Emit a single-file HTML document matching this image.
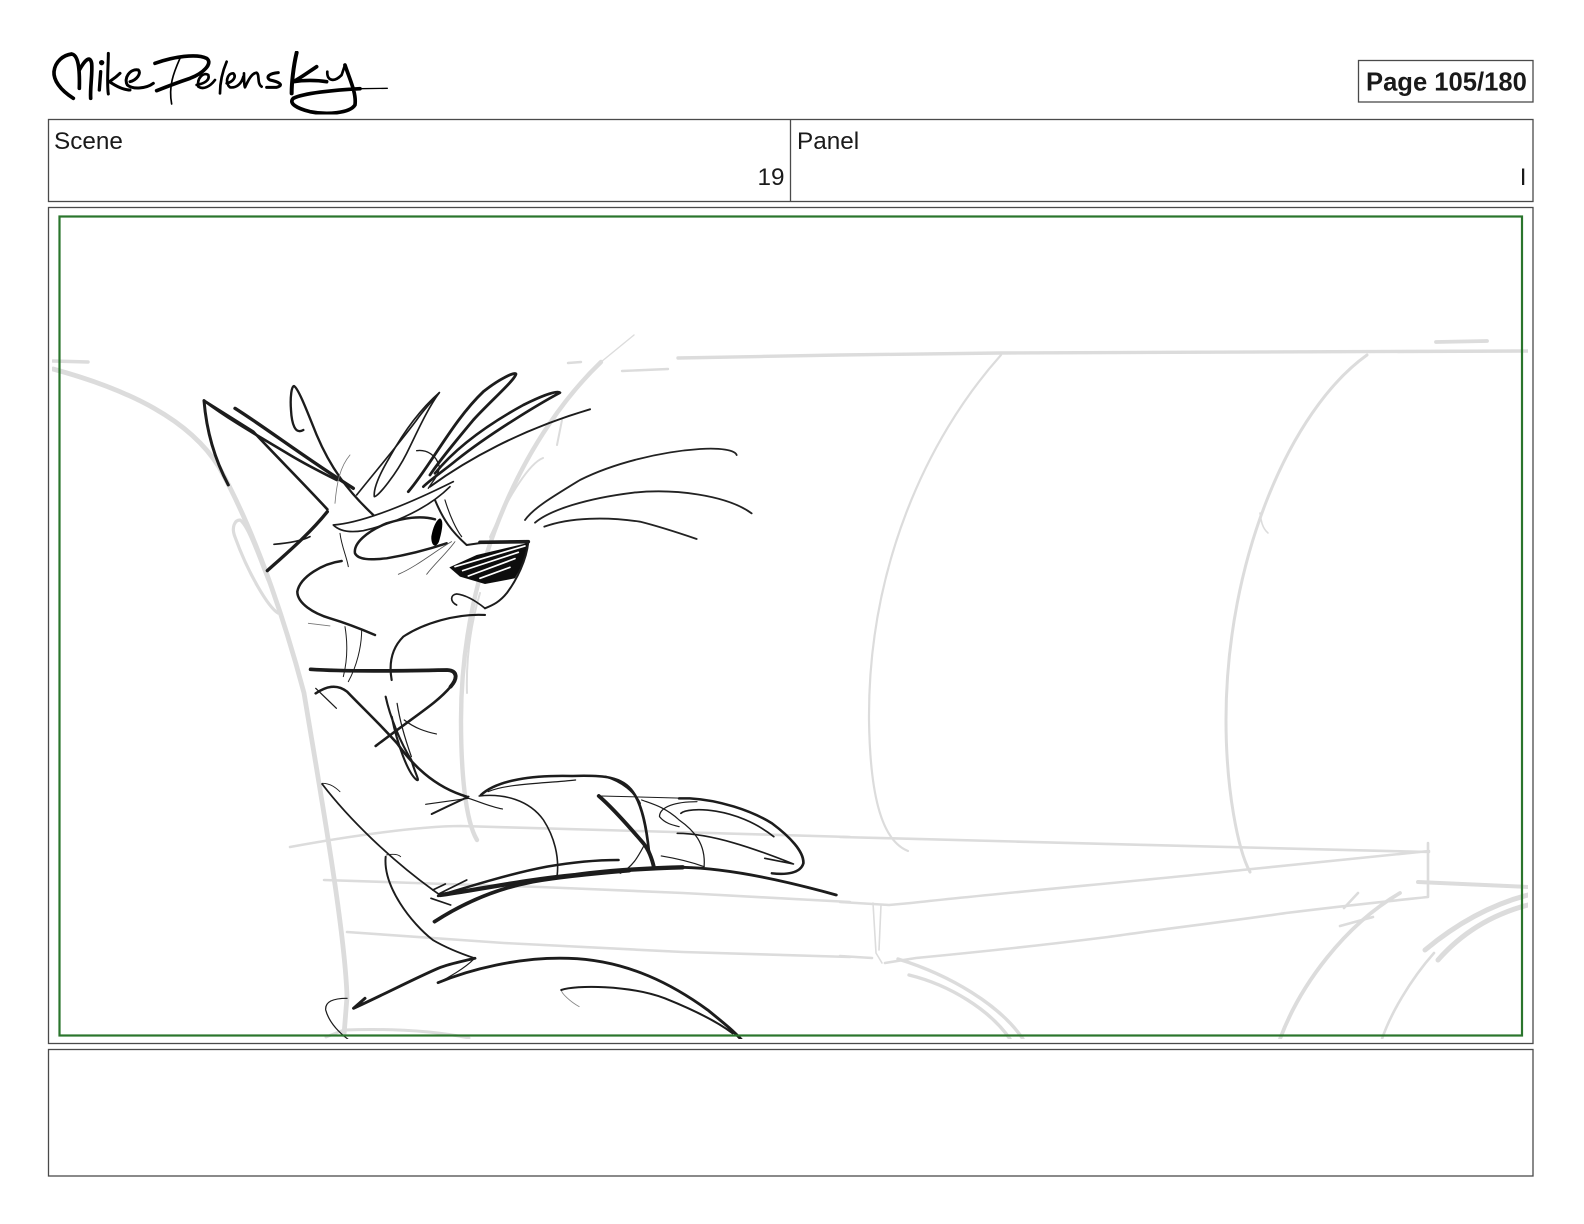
<!DOCTYPE html>
<html lang="en">
<head>
<meta charset="utf-8">
<title>Storyboard page 105/180</title>
<style>
html,body{margin:0;padding:0;background:#fff;width:1584px;height:1224px;overflow:hidden}
svg{display:block;position:absolute;left:0;top:0}
text{font-family:"Liberation Sans",Arial,sans-serif;fill:#1a1a1a}
</style>
</head>
<body>
<svg width="1584" height="1224" viewBox="0 0 1584 1224" xmlns="http://www.w3.org/2000/svg">
<defs>
<clipPath id="c"><rect x="52" y="209" width="1476" height="830"/></clipPath>
<filter id="b" x="-2%" y="-2%" width="104%" height="104%"><feGaussianBlur stdDeviation="0.35"/></filter>
</defs>
<rect width="1584" height="1224" fill="#fff"/>

<!-- signature -->
<g transform="translate(40 30) scale(.3333)" fill="none" stroke="#000" stroke-linecap="round" stroke-linejoin="round" filter="url(#b)">
<title>Mike Pelensky signature</title>
<path stroke-width="11" d="M100 205C60 180 40 150 42 125C45 95 70 75 95 72C112 75 120 105 118 175"/>
<path stroke-width="11" d="M118 120C135 90 150 75 155 100C158 130 150 170 152 205"/>
<circle cx="185" cy="98" r="8" fill="#000" stroke="none"/>
<path stroke-width="10" d="M182 125L178 180"/>
<path stroke-width="9" d="M205 70C205 110 200 160 205 192M240 130C225 145 215 150 208 155C230 170 250 180 270 180"/>
<path stroke-width="9" d="M270 155C290 150 305 130 295 120C270 115 250 145 262 165C280 180 320 175 340 160"/>
<path stroke-width="11" d="M345 100C400 80 470 70 500 85C520 100 490 130 450 145C420 155 380 170 350 182"/>
<path stroke-width="5" d="M420 85C400 130 385 170 395 222"/>
<path stroke-width="8" d="M470 165C495 160 510 150 505 135C490 125 470 145 475 170C490 180 510 170 525 150M560 95C545 130 540 160 540 190"/>
<path stroke-width="8" d="M560 160C580 155 590 140 580 130C560 130 555 160 570 172C590 175 605 160 610 140M612 130C612 150 612 165 615 172C625 150 635 130 650 128C660 135 650 160 665 170"/>
<path stroke-width="9" d="M715 128C690 130 675 140 690 150C715 155 735 165 710 172L680 172"/>
<path stroke-width="12" d="M770 68C760 110 755 160 755 190"/>
<path stroke-width="11" d="M830 110C800 130 780 145 760 155C790 150 830 150 860 155"/>
<path stroke-width="8" d="M862 125C860 150 880 160 905 135L915 105"/>
<path stroke-width="11" d="M915 105C930 150 950 190 945 225C930 250 860 255 810 245C770 235 745 220 760 205C790 190 880 180 960 176"/>
<path stroke-width="4" d="M960 176L1042 175"/>
</g>

<!-- header boxes -->
<g fill="none" stroke="#4a4a4a" stroke-width="1.3">
<rect x="1358.5" y="60.5" width="174.5" height="41.5"/>
<rect x="48.5" y="119.5" width="1484.5" height="82"/>
<line x1="790.5" y1="119.5" x2="790.5" y2="201.5"/>
<rect x="48.5" y="207.5" width="1484.5" height="836"/>
<rect x="48.5" y="1049.5" width="1484.5" height="126.5"/>
</g>
<text x="1366" y="90.5" font-size="25.6" font-weight="700">Page 105/180</text>
<text x="54" y="149" font-size="24.3">Scene</text>
<text x="784.5" y="185" font-size="24.3" text-anchor="end">19</text>
<text x="797" y="149" font-size="24.3">Panel</text>
<text x="1526.5" y="185" font-size="24.3" text-anchor="end">I</text>

<g clip-path="url(#c)">
<!-- grey layout sketch -->
<g fill="none" stroke="#dcdcdc" stroke-width="2.6" stroke-linecap="round" stroke-linejoin="round" filter="url(#b)">
<path stroke-width="3.4" d="M678 358L840 355L1000 353L1528 351"/>
<path stroke-width="3.8" d="M1436 342L1487 341"/>
<path stroke-width="2.2" d="M1001 355C925 440 868 570 869 720C870 790 880 840 908 851"/>
<path stroke-width="3" d="M1367 355C1290 410 1226 560 1226 720C1226 790 1238 850 1250 872"/>
<path stroke-width="1.6" d="M1260 513C1261 520 1262 528 1268 533"/>
<path d="M840 837C1000 842 1242 847 1429 852"/>
<path d="M840 902L889 905L911 903C1000 893 1150 880 1242 870C1320 862 1380 856 1429 851"/>
<path d="M885 963L916 958C1000 950 1060 943 1108 937C1170 928 1240 920 1286 913C1350 905 1400 900 1428 897L1428 843"/>
<path stroke-width="1.6" d="M873 903L876 953L882 963M881 905L879 950"/>
<path d="M840 956L872 958"/>
<path stroke-width="4" d="M1418 882L1528 887"/>
<path stroke-width="3.4" d="M898 959C950 975 1000 1005 1023 1039M909 975C950 985 990 1010 1010 1039"/>
<path stroke-width="3.8" d="M1400 893C1345 925 1300 985 1280 1039"/>
<path stroke-width="5" d="M1528 895C1490 905 1455 925 1425 950M1528 905C1490 915 1460 935 1438 960"/>
<path d="M1434 953C1410 980 1390 1015 1382 1039M1358 893L1344 908M1373 917L1340 926"/>
<path stroke-width="3.5" d="M53 361L88 362"/>
<path stroke-width="4.8" d="M53 369C130 390 190 420 219 467C260 540 290 640 304 693C320 790 345 930 347 997L344 1035"/>
<path stroke-width="3.2" d="M278 613C268 607 248 573 235 537C231 527 235 520 240 520C248 525 258 555 268 580"/>
<path stroke-width="4.4" d="M601 362C530 430 461 560 461 720C461 770 465 820 477 840"/>
<path stroke-width="1.4" d="M634 335L601 362"/>
<path stroke-width="2" d="M543 458C530 463 510 493 490 537M480 593C470 627 466 660 467 693M562 420L557 445"/>
<path stroke-width="2.4" d="M568 363L581 362M622 371L668 369"/>
<path d="M290 847C350 836 420 826 461 826L850 837"/>
<path d="M324 880L415 883L540 887L683 893L850 902"/>
<path d="M347 932L504 943L683 952L850 957"/>
<path stroke-width="3" d="M326 1037L344 1030C400 1028 440 1032 469 1038"/>
</g>

<!-- head -->
<g transform="translate(190 360) scale(.3333)" fill="none" stroke="#1c1c1c" stroke-width="7" stroke-linecap="round" stroke-linejoin="round" filter="url(#b)">
<path stroke-width="9" d="M115 375C75 300 50 220 42 122"/>
<path stroke-width="8" d="M42 122L190 215C260 290 340 370 412 448"/>
<path stroke-width="8" d="M42 122C120 180 200 225 300 285C350 315 400 340 440 360"/>
<path stroke-width="10" d="M135 145C230 205 340 290 490 385"/>
<path stroke-width="7" d="M340 210C315 225 305 190 303 150C300 110 305 78 312 78C325 85 350 150 380 225C420 320 470 390 550 465"/>
<path stroke-width="2.5" stroke="#777" d="M480 285C450 320 440 370 435 430"/>
<path stroke-width="5" d="M500 405C560 330 620 260 680 180C700 150 730 120 748 98"/>
<path stroke-width="5" d="M748 98C700 140 650 200 600 290C570 340 550 385 553 410C565 410 620 340 650 280C680 220 710 150 748 98"/>
<path stroke-width="8.5" d="M655 395C720 320 790 180 880 95C930 55 975 35 978 42C975 60 900 125 850 180C800 240 750 300 720 345"/>
<path stroke-width="8" d="M735 340C800 260 900 190 1000 135C1050 110 1100 90 1110 98C1050 130 900 220 800 300C770 325 720 360 700 380"/>
<path stroke-width="6" d="M720 380C830 300 990 210 1200 148"/>
<path stroke-width="4" d="M680 272C710 268 740 285 748 320C745 350 730 360 715 385"/>
<path stroke-width="5" d="M430 495C500 490 620 450 790 365M430 495C445 510 470 520 520 512C620 490 720 440 780 380"/>
<path stroke-width="7.5" d="M735 478C690 465 640 475 590 490C530 515 490 550 495 580C505 600 540 600 590 595C650 585 710 570 770 550"/>
<path fill="#000" stroke="none" d="M750 475C762 480 757 510 747 545C737 567 723 557 724 530C728 505 738 480 750 475Z"/>
<path stroke-width="6" d="M735 420C760 480 785 515 830 555L880 548"/>
<path stroke-width="3.5" d="M765 420C780 470 800 510 815 530"/>
<path stroke-width="11" d="M870 547L1015 545"/>
<path fill="#111" stroke="none" d="M778 622L860 585L1018 548L1000 610L975 655L885 672L810 650Z"/>
<g stroke="#fff" stroke-width="5">
<path d="M795 620L1005 558M818 632L985 577M835 648L975 596M870 655L960 622"/>
</g>
<path stroke-width="6" d="M1015 545C1010 600 980 660 950 700C930 725 910 735 885 745"/>
<path stroke-width="5" d="M885 745C860 725 830 705 800 702C780 705 780 725 800 735"/>
<path stroke-width="6.5" d="M885 765C800 760 700 790 640 830C600 870 598 920 605 960"/>
<path stroke-width="2.5" stroke="#555" d="M785 545C740 570 680 620 625 643M795 545C770 580 735 610 710 643"/>
<path stroke-width="3" d="M450 520C455 560 470 590 475 620"/>
<path stroke-width="7.5" d="M455 603C400 610 330 650 322 695C322 730 370 760 420 775C470 790 520 810 555 825"/>
<path stroke-width="5" d="M252 553C290 550 330 545 360 530"/>
<path stroke-width="10" d="M232 632C290 580 360 520 412 455"/>
<path stroke-width="2.5" stroke="#777" d="M355 790L420 798"/>
<path stroke-width="3" d="M465 800C475 860 470 910 460 950M515 810C515 860 500 920 475 965"/>
</g>

<!-- whiskers -->
<g transform="translate(500 430) scale(.3333)" fill="none" stroke="#222" stroke-width="5.5" stroke-linecap="round" filter="url(#b)">
<path d="M75 270C100 235 150 205 240 150C340 100 480 65 600 57C660 53 705 60 710 75"/>
<path d="M105 278C150 240 260 205 400 188C520 175 680 195 755 250"/>
<path d="M133 290C210 262 320 260 420 275C480 290 540 310 590 327"/>
</g>

<!-- body -->
<g transform="translate(290 660) scale(.357 .3333)" fill="none" stroke="#1c1c1c" stroke-width="7" stroke-linecap="round" stroke-linejoin="round" filter="url(#b)">
<path stroke-width="11" d="M58 28C150 35 350 32 440 30C470 32 470 55 450 80"/>
<path stroke-width="7.5" d="M450 80C410 130 360 160 240 258"/>
<path stroke-width="3.5" d="M72 85L130 145"/>
<path stroke-width="7.5" d="M72 100C100 80 130 70 160 95C200 140 250 190 300 250C340 310 400 380 495 410"/>
<path stroke-width="6" d="M268 110C280 170 310 250 340 300C350 340 365 365 355 360C330 340 300 250 285 170"/>
<path stroke-width="3.5" d="M300 130C310 200 330 260 340 290M320 180C350 205 380 215 410 222"/>
<path stroke-width="6" d="M397 462C430 445 470 425 500 410"/>
<path stroke-width="3.5" d="M380 433L500 415C530 425 560 440 595 447"/>
<path stroke-width="7.5" d="M535 405C580 360 680 345 790 348C880 345 930 350 960 395C990 440 1000 520 1005 570L1020 625"/>
<path stroke-width="3.5" d="M555 395C610 370 720 370 800 360"/>
<path stroke-width="6" d="M885 350C930 365 965 395 980 430"/>
<path stroke-width="4.5" d="M530 408C600 400 670 420 710 480C740 530 755 590 748 650"/>
<path stroke-width="11" d="M865 408C900 440 950 500 990 550C1005 570 1015 600 1020 625"/>
<path stroke-width="7.5" d="M1090 415L1120 415C1200 420 1290 450 1350 490C1400 530 1440 575 1438 610C1430 640 1390 645 1350 640"/>
<path stroke-width="3" d="M870 408L1120 415"/>
<path stroke-width="3.5" d="M985 420C1010 430 1050 440 1090 480C1130 510 1165 550 1160 620"/>
<path stroke-width="3.5" d="M1035 470C1035 440 1080 425 1140 425M1035 470C1050 490 1070 495 1090 500"/>
<path stroke-width="5" d="M1095 460C1115 440 1250 440 1355 530"/>
<path stroke-width="5" d="M1085 520C1180 520 1300 565 1410 612L1330 595"/>
<path stroke-width="3.5" d="M1040 588C1080 595 1120 605 1160 620"/>
<path stroke-width="3.5" d="M990 560C975 590 960 620 925 640"/>
<path stroke-width="13" d="M420 705C500 695 650 660 800 645C900 630 1000 625 1100 622"/>
<path stroke-width="8.5" d="M1100 622C1230 625 1380 660 1530 705"/>
<path stroke-width="7.5" d="M415 708C500 680 620 640 720 620C800 605 860 600 920 600"/>
<path stroke-width="11" d="M405 785C470 740 560 690 680 665C760 650 860 640 950 632"/>
<path stroke-width="5" d="M400 690L435 672M420 700L495 660M395 715L450 735"/>
<path stroke-width="2.5" d="M90 370C115 370 130 385 140 395"/>
<path stroke-width="5" d="M90 372C160 470 280 600 420 705"/>
<path stroke-width="2.5" d="M270 585C295 580 305 585 310 590"/>
<path stroke-width="5.5" d="M268 590C260 680 340 790 400 840C440 865 490 885 518 895"/>
<path stroke-width="8.5" d="M518 895C480 905 450 910 415 925C350 955 260 1005 178 1045L210 1015"/>
<path stroke-width="3.5" d="M515 897C490 925 440 955 415 968"/>
<path stroke-width="8.5" d="M415 968C500 930 640 890 780 895C950 900 1080 980 1170 1050C1210 1085 1240 1110 1265 1140"/>
<path stroke-width="2.5" stroke="#888" d="M810 1040C785 1025 760 1000 760 990"/>
<path stroke-width="6" d="M760 990C800 975 950 975 1050 1015C1120 1045 1190 1080 1240 1120"/>
<path stroke-width="3.5" d="M160 1015C120 1015 98 1025 100 1050C110 1090 140 1120 165 1140"/>
</g>
</g>

<rect x="59.5" y="216.5" width="1462.5" height="819" fill="none" stroke="#2a752c" stroke-width="2.2"/>
</svg>
</body>
</html>
